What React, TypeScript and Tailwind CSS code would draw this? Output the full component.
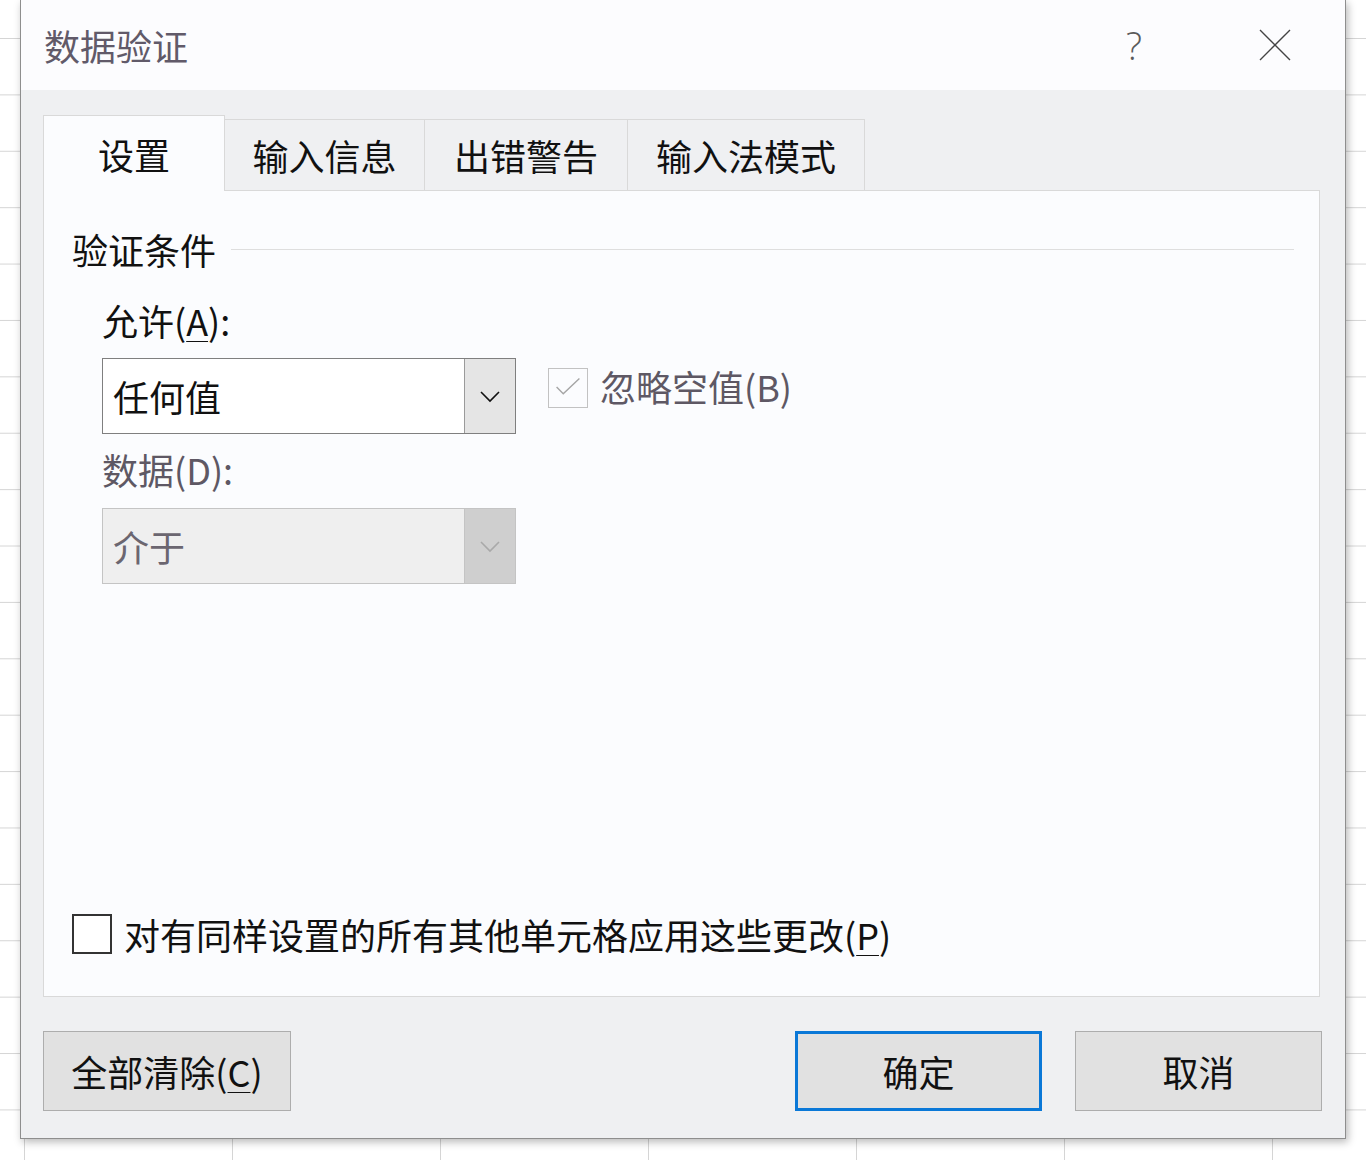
import React from "react";

const cjk = "font-['Noto_Sans_CJK_SC',sans-serif]";

function Chevron({ color }: { color: string }) {
  return (
    <svg width="22" height="13" viewBox="0 0 22 13" fill="none">
      <path d="M2 2 L11 11 L20 2" stroke={color} strokeWidth="1.6" />
    </svg>
  );
}

function Combo({ value, disabled }: { value: string; disabled?: boolean }) {
  return (
    <div
      className={
        "flex h-[76px] w-[414px] border " +
        (disabled ? "border-[#c4c4c4] bg-[#efefef]" : "border-[#7f7f7f] bg-white")
      }
    >
      <div
        className={
          "flex flex-1 items-center pl-[10px] text-[36px] leading-[44px] " +
          (disabled ? "text-[#6b6670]" : "text-[#111]")
        }
      >
        {value}
      </div>
      <div
        className={
          "flex w-[51px] items-center justify-center border-l " +
          (disabled ? "border-[#c4c4c4] bg-[#cfcfcf]" : "border-[#9a9a9a] bg-[#e5e5e5]")
        }
      >
        <Chevron color={disabled ? "#a9a9a9" : "#111"} />
      </div>
    </div>
  );
}

function Tab({ label, width, active }: { label: string; width: string; active?: boolean }) {
  return (
    <div
      className={
        "flex items-center justify-center border-[#d9d9d9] text-[36px] leading-[44px] text-[#111] " +
        width +
        (active ? " h-[76px] border border-b-0 bg-[#fbfcfe]" : " h-[72px] border border-l-0 bg-[#eff0f2]")
      }
    >
      {label}
    </div>
  );
}

function Button({ children, primary, width }: { children: React.ReactNode; primary?: boolean; width: string }) {
  return (
    <div
      className={
        "flex h-[80px] items-center justify-center bg-[#e1e1e1] text-[36px] leading-[44px] text-[#111] " +
        width +
        (primary ? " border-[3px] border-[#0a78d7]" : " border-[1.5px] border-[#adadad]")
      }
    >
      {children}
    </div>
  );
}

export default function App() {
  return (
    <div
      className={
        "h-[1160px] w-[1366px] overflow-hidden bg-white " +
        "[background-image:linear-gradient(to_bottom,#d5d5d5_1px,transparent_1px),linear-gradient(to_right,#d5d5d5_1px,transparent_1px)] " +
        "[background-position:0_38px,24px_0] [background-size:100%_56.4px,208px_100%] " +
        cjk
      }
    >
      <div className="ml-[20px] flex h-[1139px] w-[1326px] flex-col border border-t-0 border-[#8e8e8e] bg-[#eff0f2] shadow-[2px_3px_8px_rgba(0,0,0,0.28)]">
        {/* title bar */}
        <div className="flex h-[90px] shrink-0 items-center bg-[#fcfcfe] pl-[23px]">
          <div className="text-[36px] leading-[44px] text-[#615a69]">数据验证</div>
          <div className="ml-auto mr-[117px] font-['Open_Sans',sans-serif] text-[38px] font-light leading-[44px] text-[#5a5a5a]">
            ?
          </div>
          <svg width="32" height="32" viewBox="0 0 32 32" className="mr-[54px]">
            <path d="M1 1 L31 31 M31 1 L1 31" stroke="#444" strokeWidth="1.4" />
          </svg>
        </div>

        {/* body */}
        <div className="flex flex-1 flex-col pl-[22px] pr-[23px] pt-[25px]">
          <div className="relative z-10 -mb-px flex h-[76px] items-end">
            <Tab label="设置" width="w-[182px]" active />
            <Tab label="输入信息" width="w-[200px]" />
            <Tab label="出错警告" width="w-[203px]" />
            <Tab label="输入法模式" width="w-[237px]" />
          </div>

          <div className="mr-[2px] flex h-[807px] flex-col border border-[#d9d9d9] bg-[#fbfcfe]">
            <div className="flex items-center pl-[28px] pr-[25px] pt-[36px]">
              <div className="text-[36px] leading-[44px] text-[#111]">验证条件</div>
              <div className="ml-[15px] h-px flex-1 bg-[#dedede]" />
            </div>

            <div className="flex flex-col pl-[58px]">
              <div className="mt-[27px] text-[36px] leading-[44px] text-[#111]">
                允许(<span className="underline decoration-1 underline-offset-[5px]">A</span>):
              </div>
              <div className="mt-[16px] flex items-start">
                <Combo value="任何值" />
                <div className="ml-[32px] mt-[10px] flex h-[40px] w-[40px] items-center justify-center border border-[#c2c2c2] bg-[#fbfcfe]">
                  <svg width="40" height="40" viewBox="0 0 40 40" fill="none">
                    <path d="M8 19 L15 26 L32 10" stroke="#a5a5a5" strokeWidth="1.5" />
                  </svg>
                </div>
                <div className="ml-[12px] mt-[6px] text-[36px] leading-[44px] text-[#5e5864]">忽略空值(B)</div>
              </div>
              <div className="mt-[13px] text-[36px] leading-[44px] text-[#5e5864]">数据(D):</div>
              <div className="mt-[17px]">
                <Combo value="介于" disabled />
              </div>
            </div>

            <div className="mt-auto flex items-center pb-[40px] pl-[28px]">
              <div className="h-[40px] w-[40px] border-2 border-[#333] bg-white" />
              <div className="ml-[12px] text-[36px] leading-[44px] text-[#111]">
                对有同样设置的所有其他单元格应用这些更改(
                <span className="underline decoration-1 underline-offset-[5px]">P</span>)
              </div>
            </div>
          </div>

          <div className="mt-[34px] flex">
            <Button width="w-[248px]">
              全部清除(<span className="underline decoration-1 underline-offset-[5px]">C</span>)
            </Button>
            <div className="ml-auto flex gap-[33px]">
              <Button width="w-[247px]" primary>
                确定
              </Button>
              <Button width="w-[247px]">取消</Button>
            </div>
          </div>
        </div>
      </div>
    </div>
  );
}
